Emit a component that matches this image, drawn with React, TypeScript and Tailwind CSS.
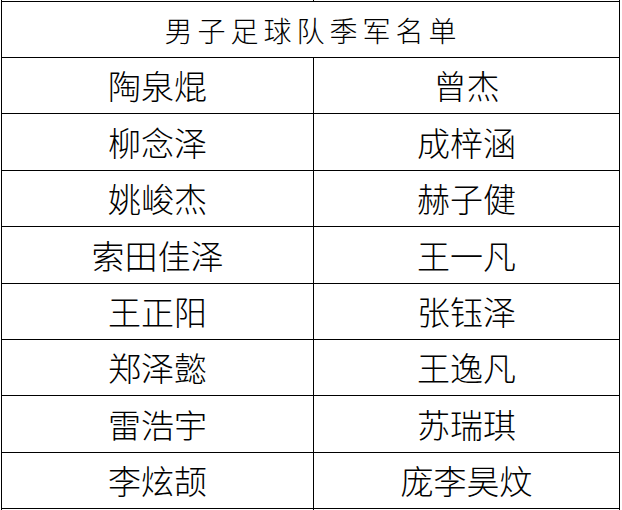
const rows: [string, string, number][] = [
  ["陶泉焜", "曾杰", 56],
  ["柳念泽", "成梓涵", 57],
  ["姚峻杰", "赫子健", 56],
  ["索田佳泽", "王一凡", 57],
  ["王正阳", "张钰泽", 56],
  ["郑泽懿", "王逸凡", 56],
  ["雷浩宇", "苏瑞琪", 57],
  ["李炫颉", "庞李昊炆", 56],
];

const rowHeight: Record<number, string> = {
  56: "h-[56px]",
  57: "h-[57px]",
};

export default function App() {
  return (
    <div
      className="h-[510px] w-[622px] overflow-hidden bg-white text-black font-light"
      style={{ fontFamily: '"Noto Sans CJK SC", "Noto Sans", sans-serif' }}
    >
      <div className="ml-[1px] w-[619px] border-x border-black">
        {/* tail of the previous row, cut off by the top edge */}
        <div className="grid h-[1px] grid-cols-[312px_1fr]">
          <div className="border-r border-black" />
          <div />
        </div>

        <div className="flex h-[57px] items-center justify-center border-y border-black">
          <span className="text-[28px] leading-none tracking-[5px] pl-[5px]">男子足球队季军名单</span>
        </div>

        {rows.map(([left, right, h]) => (
          <div
            key={left}
            className={`grid grid-cols-[312px_1fr] border-b border-black ${rowHeight[h]}`}
          >
            <div className="flex items-center justify-center border-r border-black text-[33px] leading-none">
              {left}
            </div>
            <div className="flex items-center justify-center text-[33px] leading-none">
              {right}
            </div>
          </div>
        ))}

        <div className="grid h-[20px] grid-cols-[312px_1fr]">
          <div className="border-r border-black" />
          <div />
        </div>
      </div>
    </div>
  );
}
